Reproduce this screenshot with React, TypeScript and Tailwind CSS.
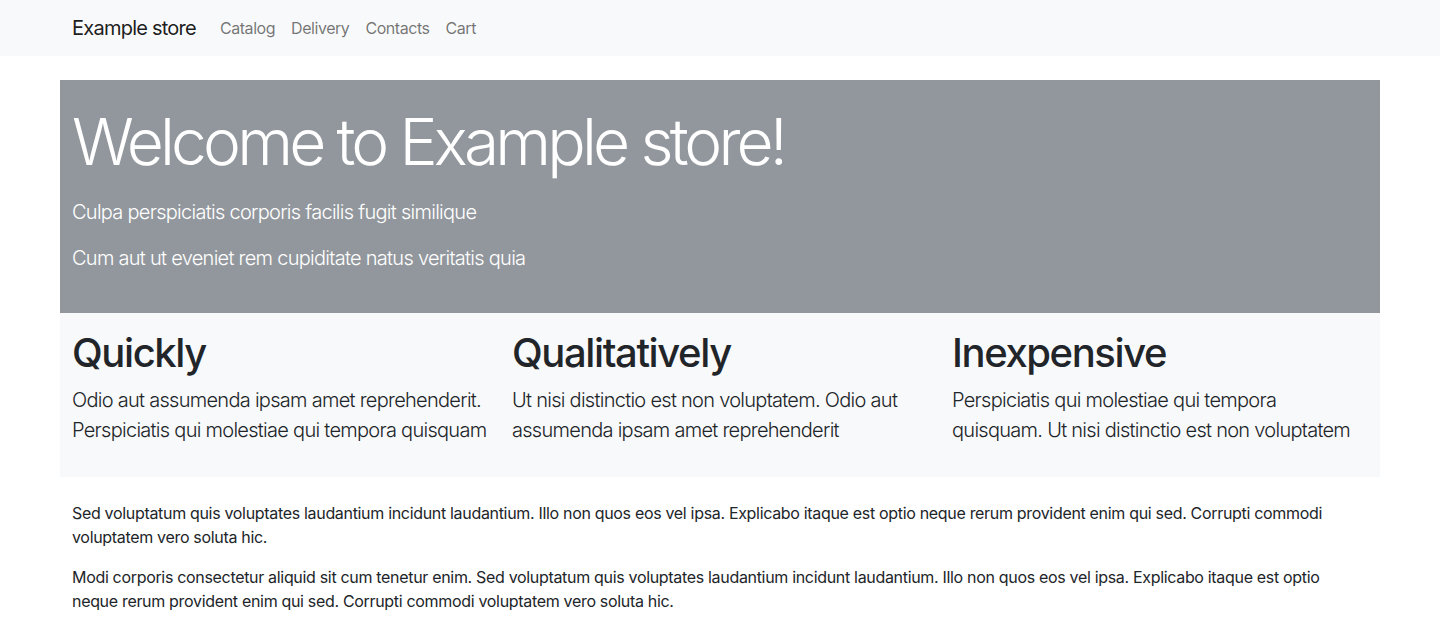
const features = [
  {
    title: "Quickly",
    text: "Odio aut assumenda ipsam amet reprehenderit. Perspiciatis qui molestiae qui tempora quisquam",
  },
  {
    title: "Qualitatively",
    text: "Ut nisi distinctio est non voluptatem. Odio aut assumenda ipsam amet reprehenderit",
  },
  {
    title: "Inexpensive",
    text: "Perspiciatis qui molestiae qui tempora quisquam. Ut nisi distinctio est non voluptatem",
  },
];

export default function App() {
  return (
    <div className="min-h-screen bg-white text-[#212529] font-['Inter','Noto_Sans',sans-serif]">
      <nav className="h-14 bg-[#f8f9fa]">
        <div className="mx-auto flex h-full w-[1320px] items-center px-3">
          <a className="mr-4 text-xl tracking-[-0.038em] text-black/90">Example store</a>
          <ul className="flex">
            {["Catalog", "Delivery", "Contacts", "Cart"].map((l) => (
              <li key={l}>
                <a className="block px-2 text-base tracking-[-0.028em] text-black/55">{l}</a>
              </li>
            ))}
          </ul>
        </div>
      </nav>

      <main className="mx-auto mt-6 w-[1320px]">
        <section className="bg-[#92979d] px-3 py-6 text-white">
          <h1 className="mb-4 text-[64px] font-light leading-[1.2] tracking-[-0.06em]">
            Welcome to Example store!
          </h1>
          <p className="mb-4 text-xl font-light leading-[30px] tracking-[-0.036em]">
            Culpa perspiciatis corporis facilis fugit similique
          </p>
          <p className="mb-4 text-xl font-light leading-[30px] tracking-[-0.036em]">
            Cum aut ut eveniet rem cupiditate natus veritatis quia
          </p>
        </section>

        <section className="grid grid-cols-3 bg-[#f8f9fa] py-4">
          {features.map((f) => (
            <div key={f.title} className="px-3">
              <h2 className="mb-2 text-[40px] font-medium leading-[48px] tracking-[-0.035em]">
                {f.title}
              </h2>
              <p className="mb-4 text-xl font-light leading-[30px] tracking-[-0.036em]">{f.text}</p>
            </div>
          ))}
        </section>

        <section className="px-3 pt-6 text-base leading-6 tracking-[-0.02em]">
          <p className="mb-4">
            Sed voluptatum quis voluptates laudantium incidunt laudantium. Illo non quos eos vel ipsa. Explicabo itaque est optio neque rerum provident enim qui sed. Corrupti commodi voluptatem vero soluta hic.
          </p>
          <p className="mb-4">
            Modi corporis consectetur aliquid sit cum tenetur enim. Sed voluptatum quis voluptates laudantium incidunt laudantium. Illo non quos eos vel ipsa. Explicabo itaque est optio neque rerum provident enim qui sed. Corrupti commodi voluptatem vero soluta hic.
          </p>
        </section>
      </main>
    </div>
  );
}
